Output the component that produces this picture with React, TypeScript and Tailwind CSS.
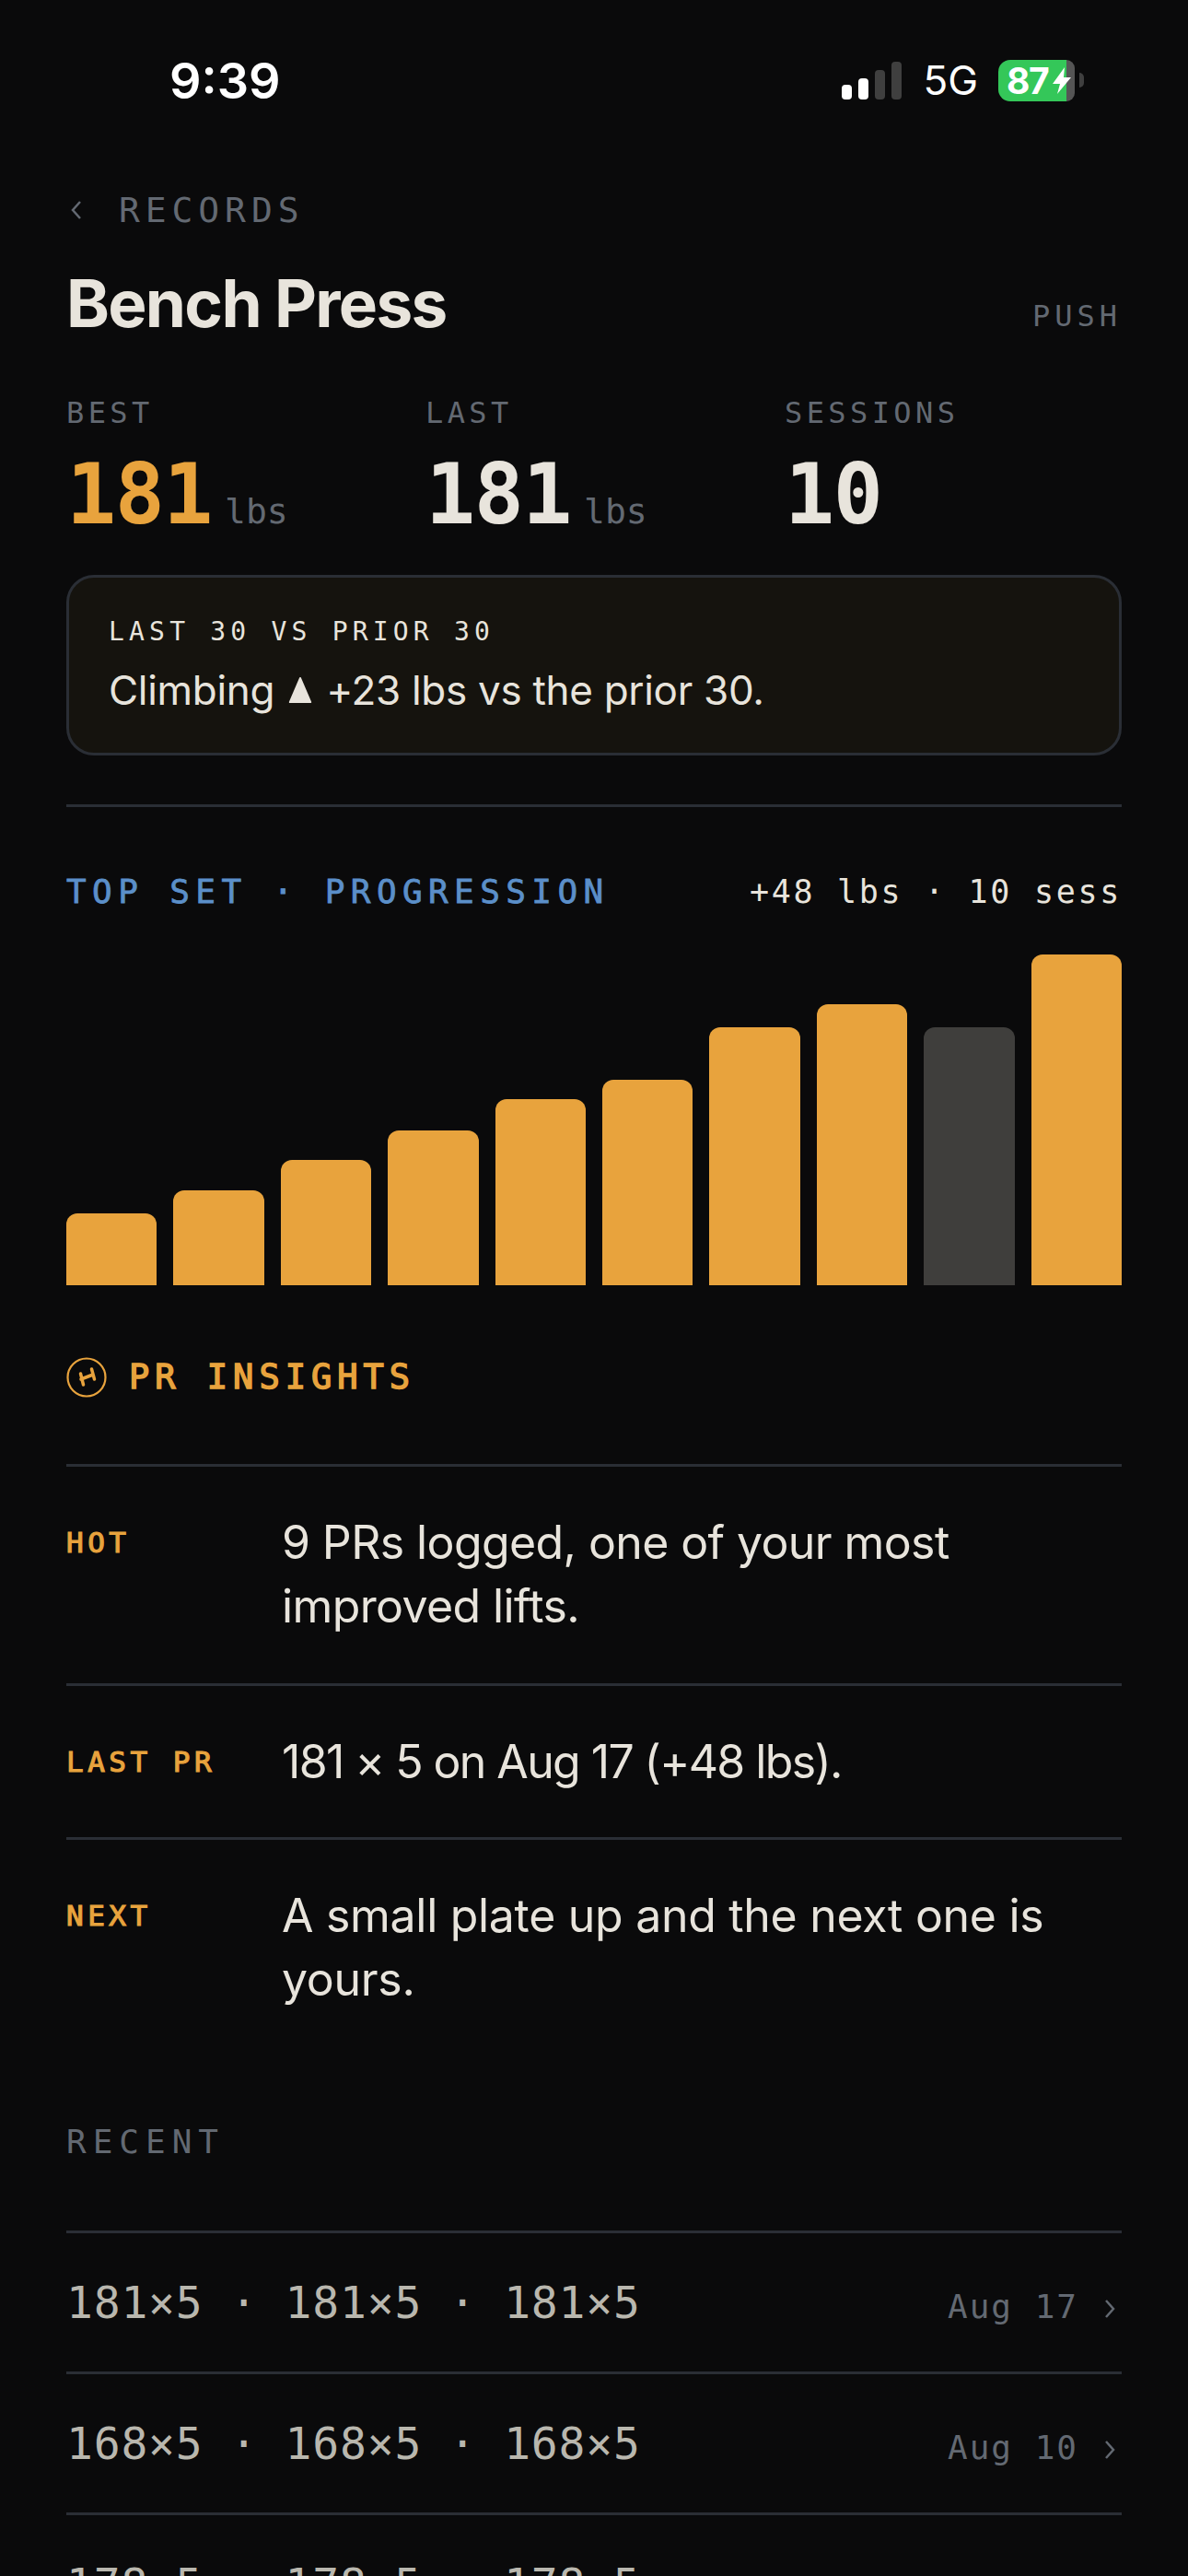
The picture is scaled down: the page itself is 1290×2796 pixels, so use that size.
const bars = [78, 103, 136, 168, 202, 223, 280, 305, 280, 359];

const insights = [
  { tag: 'HOT', text: '9 PRs logged, one of your most improved lifts.', h: 'h-[238px]', track: 'tracking-[-0.6px]' },
  { tag: 'LAST PR', text: '181 × 5 on Aug 17 (+48 lbs).', h: 'h-[167px]', track: 'tracking-[-1.6px]' },
  { tag: 'NEXT', text: 'A small plate up and the next one is yours.', h: 'h-[238px]', track: 'tracking-[-0.3px]' },
];

const recent = [
  { sets: '181×5 · 181×5 · 181×5', date: 'Aug 17' },
  { sets: '168×5 · 168×5 · 168×5', date: 'Aug 10' },
  { sets: '178×5 · 178×5 · 178×5', date: 'Aug 3' },
];

const mono = "font-['DejaVu_Sans_Mono',monospace]";

function Chevron({ left }: { left?: boolean }) {
  return (
    <svg viewBox="0 0 13 20" className="h-[20px] w-[13px]" fill="none" stroke="#636972" strokeWidth="2.5">
      <path d={left ? 'M11 1 3 10l8 9' : 'M2 1l8 9-8 9'} />
    </svg>
  );
}

function Stat({ label, value, unit, accent }: { label: string; value: string; unit?: string; accent?: boolean }) {
  return (
    <div className="w-[390px] shrink-0">
      <div className={`${mono} text-[32px] leading-[40px] tracking-[4.4px] text-[#636972]`}>{label}</div>
      <div className="mt-[19px] flex items-baseline">
        <span className={`${mono} text-[90px] leading-[100px] font-bold tracking-[-1.5px] ${accent ? 'text-[#e8a33d]' : 'text-[#e8e4dc]'}`}>
          {value}
        </span>
        {unit && <span className={`${mono} ml-[14px] text-[38px] text-[#636972]`}>{unit}</span>}
      </div>
    </div>
  );
}

export default function App() {
  return (
    <div className="h-[2796px] w-[1290px] overflow-hidden bg-[#0a0a0b] font-['Inter',sans-serif] text-[#e8e4dc]">
      {/* status bar */}
      <div className="flex h-[176px] items-center justify-between pb-[2px] pl-[184px] pr-[113px] text-white">
        <span className="text-[54px] font-semibold">9:39</span>
        <div className="flex items-center">
          <div className="flex h-[41px] items-end gap-[7px]">
            <div className="h-[16px] w-[11px] rounded-[4px] bg-white" />
            <div className="h-[23px] w-[11px] rounded-[4px] bg-white" />
            <div className="h-[32px] w-[11px] rounded-[4px] bg-[#3f3f3f]" />
            <div className="h-[41px] w-[11px] rounded-[4px] bg-[#3f3f3f]" />
          </div>
          <span className="ml-[23px] text-[44px] leading-none">5G</span>
          <div className="relative ml-[22px] flex h-[45px]">
            <div className="h-full w-[74px] rounded-l-[13px] bg-[#34c759] pl-[9px] text-[39px] font-bold leading-[45px] tracking-[-1.5px] text-white">
              87
            </div>
            <div className="h-full w-[9px] rounded-r-[12px] bg-[#555]" />
            <svg viewBox="0 0 20 30" className="absolute left-[59px] top-[8px] h-[30px] w-[20px]">
              <path d="M13 0 0 18h8l-3 11L20 11h-8z" fill="#fff" />
            </svg>
          </div>
          <div className="ml-[5px] h-[16px] w-[5px] rounded-r-full bg-[#3f3f3f]" />
        </div>
      </div>

      <div className="px-[72px]">
        {/* back link */}
        <div className={`${mono} mt-[26px] flex h-[52px] items-center text-[38px] text-[#636972]`}>
          <span className="ml-[4px] w-[53px]">
            <Chevron left />
          </span>
          <span className="tracking-[5.9px]">RECORDS</span>
        </div>

        {/* title */}
        <div className="mt-[34px] flex items-end justify-between">
          <h1 className="text-[71px] font-bold leading-[82px] tracking-[-1.7px]">Bench Press</h1>
          <span className={`${mono} pb-[3px] text-[32px] tracking-[5px] text-[#636972]`}>PUSH</span>
        </div>

        {/* stats */}
        <div className="mt-[58px] flex">
          <Stat label="BEST" value="181" unit="lbs" accent />
          <Stat label="LAST" value="181" unit="lbs" />
          <Stat label="SESSIONS" value="10" />
        </div>

        {/* trend card */}
        <div className="mt-[37px] h-[196px] rounded-[30px] border-[3px] border-[#2a2e35] bg-[#15130e] px-[43px] pt-[41px]">
          <div className={`${mono} text-[28px] leading-[36px] tracking-[5.2px]`}>LAST 30 VS PRIOR 30</div>
          <div className="mt-[18px] flex items-center text-[44px] leading-[54px] tracking-[-0.3px]">
            Climbing
            <svg viewBox="0 0 28 32" className="mx-[14px] h-[30px] w-[28px]">
              <path d="M14 2 26 30H2z" fill="#e8e4dc" stroke="#e8e4dc" strokeLinejoin="round" strokeWidth="2" />
            </svg>
            +23 lbs vs the prior 30.
          </div>
        </div>

        <div className="mt-[53px] h-[3px] bg-[#2a2e35]" />

        {/* progression */}
        <div className={`${mono} mt-[68px] flex h-[48px] items-center justify-between`}>
          <span className="text-[36px] tracking-[6.4px] text-[#5b8fc9] [-webkit-text-stroke:0.8px]">TOP SET · PROGRESSION</span>
          <span className="text-[35px] tracking-[2.7px]">+48 lbs · 10 sess</span>
        </div>
        <div className="mt-[44px] flex h-[359px] items-end gap-[18px]">
          {bars.map((h, i) => (
            <div
              key={i}
              className={`flex-1 rounded-t-[12px] ${i === 8 ? 'bg-[#3f3e3c]' : 'bg-[#e8a33d]'}`}
              style={{ height: h }}
            />
          ))}
        </div>

        {/* PR insights */}
        <div className="mt-[77px] flex h-[46px] items-center">
          <svg viewBox="0 0 44 44" className="h-[44px] w-[44px]" fill="none" stroke="#e8a33d">
            <circle cx="22" cy="22" r="20.5" strokeWidth="2.2" />
            <path d="M16 24l13-5M15.5 18l3 12M27.5 13l3 11" strokeWidth="3.5" strokeLinecap="round" />
          </svg>
          <span className={`${mono} ml-[24px] text-[37px] tracking-[6px] text-[#e8a33d] [-webkit-text-stroke:1.5px]`}>PR INSIGHTS</span>
        </div>

        <div className="mt-[71px] border-t-[3px] border-[#2a2e35]">
          {insights.map((row) => (
            <div key={row.tag} className={`flex border-b-[3px] border-[#2a2e35] pt-[48px] last:border-b-0 ${row.h}`}>
              <div className={`${mono} w-[234px] shrink-0 pt-[14px] text-[31px] leading-[40px] tracking-[4.5px] text-[#e8a33d] [-webkit-text-stroke:1.2px]`}>
                {row.tag}
              </div>
              <div className={`text-[50px] leading-[69px] ${row.track}`}>{row.text}</div>
            </div>
          ))}
        </div>

        {/* recent */}
        <div className={`${mono} mt-[66px] text-[36px] leading-[48px] tracking-[7px] text-[#636972]`}>RECENT</div>
        <div className="mt-[72px] border-t-[3px] border-[#2a2e35]">
          {recent.map((row) => (
            <div key={row.date} className="flex h-[153px] items-baseline justify-between border-b-[3px] border-[#2a2e35] pt-[47px]">
              <span className={`${mono} text-[48px] leading-[56px] tracking-[0.8px] text-[#b9b7ae]`}>{row.sets}</span>
              <span className={`${mono} flex items-baseline text-[36px] tracking-[2px] text-[#636972]`}>
                {row.date}
                <span className="ml-[28px] mr-[6px]">
                  <Chevron />
                </span>
              </span>
            </div>
          ))}
        </div>
      </div>
    </div>
  );
}
